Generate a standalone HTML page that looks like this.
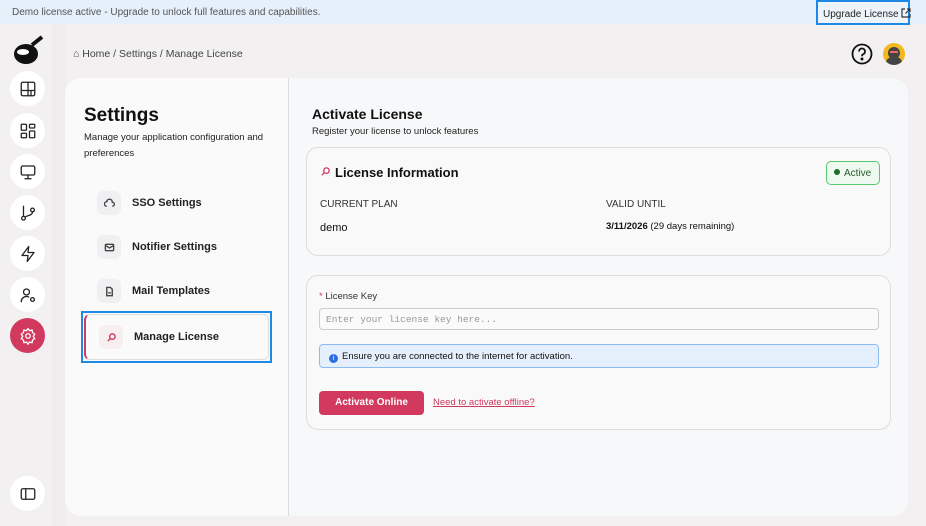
<!DOCTYPE html>
<html><head><meta charset="utf-8"><style>
*{box-sizing:border-box;margin:0;padding:0}
body{width:926px;height:526px;overflow:hidden;background:#f2f0f0;font-family:"Liberation Sans",sans-serif;color:#111;position:relative}
.banner{position:absolute;left:0;top:0;width:926px;height:24px;background:#e6f0fa;font-size:10px;color:#555;padding:7px 0 0 12px;white-space:nowrap}
.up{position:absolute;right:16px;top:0;width:94px;height:25px;border:2px solid #1e88e5;padding:6px 0 0 5px;font-size:10px;color:#222;background:#eef4fb;white-space:nowrap}
.sideband{position:absolute;left:52px;top:24px;width:13px;height:502px;background:#eeecec}
.ic{position:absolute;left:10px;width:35px;height:35px;border-radius:50%;background:#fff;display:flex;align-items:center;justify-content:center}
.ic svg{width:18px;height:18px;fill:none;stroke:#222;stroke-width:1.7;stroke-linecap:round;stroke-linejoin:round}
.crumb{position:absolute;left:73px;top:48px;font-size:10.5px;color:#444}
.card{position:absolute;left:65px;top:78px;width:843px;height:438px;background:#fafafa;border-radius:16px;overflow:hidden}
.right{position:absolute;left:223px;top:0;right:0;bottom:0;background:#f7f8f9;border-left:1.5px solid #ddd}
h1{position:absolute;left:19px;top:27px;font-size:19px;font-weight:bold}
.sub{position:absolute;left:19px;top:52px;width:200px;font-size:9.5px;line-height:16px;color:#222}
.item{position:absolute;left:32px;font-size:11px;font-weight:bold;color:#222;display:flex;align-items:center}
.item .b{width:24px;height:24px;border-radius:6px;background:#f0f0f2;margin-right:11px;display:flex;align-items:center;justify-content:center}
.item svg{width:11px;height:11px;fill:none;stroke:#444;stroke-width:1.5}
.box{position:absolute;left:17px;right:17px;background:#f9f9f9;border:1.5px solid #ddd;border-radius:12px}
.lbl{position:absolute;font-size:10px;color:#333;white-space:nowrap}
</style></head><body>
<div class="banner">Demo license active - Upgrade to unlock full features and capabilities.</div>
<div class="up">Upgrade License <svg width="10" height="10" viewBox="0 0 10 10" style="vertical-align:-1px" fill="none" stroke="#333" stroke-width="1.2"><path d="M4 1H1v8h8V6M6 1h3v3M9 1L4.5 5.5"/></svg></div>
<div class="sideband"></div>
<svg style="position:absolute;left:12px;top:33px" width="32" height="32" viewBox="0 0 32 32"><ellipse cx="14" cy="21" rx="12" ry="10" fill="#111"/><ellipse cx="11" cy="19" rx="6" ry="3" fill="#fff"/><path d="M20 12L30 4" stroke="#111" stroke-width="4"/></svg>
<div class="ic" style="top:71px"><svg viewBox="0 0 24 24"><rect x="3" y="3" width="18" height="18" rx="2"/><path d="M3 14h18M12 3v18M16 14v7"/></svg></div>
<div class="ic" style="top:113px"><svg viewBox="0 0 24 24"><rect x="3" y="3" width="7" height="8" rx="1"/><rect x="14" y="3" width="7" height="5" rx="1"/><rect x="3" y="15" width="7" height="6" rx="1"/><rect x="14" y="12" width="7" height="9" rx="1"/></svg></div>
<div class="ic" style="top:154px"><svg viewBox="0 0 24 24"><rect x="3" y="4" width="18" height="12" rx="2"/><path d="M12 16v4M8 21h8"/></svg></div>
<div class="ic" style="top:195px"><svg viewBox="0 0 24 24"><circle cx="6" cy="19" r="2.5"/><circle cx="18" cy="8" r="2.5"/><path d="M6 3v13.5M18 10.5c0 5-6 4-10 7"/></svg></div>
<div class="ic" style="top:236px"><svg viewBox="0 0 24 24"><path d="M13 2L4 14h8l-1 8 9-12h-8z"/></svg></div>
<div class="ic" style="top:277px"><svg viewBox="0 0 24 24"><circle cx="10" cy="8" r="4"/><path d="M3 21c0-4 3-7 7-7 1.5 0 2 .2 3 .6"/><circle cx="18" cy="18" r="2.5"/></svg></div>
<div class="ic" style="top:318px;background:#d13a5e"><svg viewBox="0 0 24 24" style="stroke:#fff"><circle cx="12" cy="12" r="3"/><path d="M12 2l2 3 3.5-1 .5 3.5 3 2-2 3 2 3-3 2-.5 3.5-3.5-1-2 3-2-3-3.5 1-.5-3.5-3-2 2-3-2-3 3-2L6.5 4 10 5z"/></svg></div>
<div class="ic" style="top:476px"><svg viewBox="0 0 24 24"><rect x="3" y="5" width="18" height="14" rx="2"/><path d="M9 5v14"/></svg></div>
<div class="crumb">⌂ Home / Settings / Manage License</div>
<svg style="position:absolute;left:851px;top:43px" width="22" height="22" viewBox="0 0 22 22" fill="none" stroke="#111" stroke-width="1.8"><circle cx="11" cy="11" r="9.5"/><path d="M8 8.5a3 3 0 1 1 4 2.8c-.8.4-1 1-1 2" /><circle cx="11" cy="16" r=".6" fill="#111"/></svg>
<div style="position:absolute;left:883px;top:43px;width:22px;height:22px;border-radius:50%;background:#f2b81f;overflow:hidden"><div style="position:absolute;left:5px;top:4px;width:12px;height:12px;border-radius:50%;background:#444"></div><div style="position:absolute;left:3px;top:14px;width:16px;height:10px;border-radius:6px 6px 0 0;background:#444"></div><div style="position:absolute;left:7px;top:8px;width:8px;height:2px;background:#e66"></div></div>
<div class="card">
<h1>Settings</h1>
<div class="sub">Manage your application configuration and preferences</div>
<div class="item" style="top:113px"><div class="b"><svg viewBox="0 0 12 12"><path d="M3 9a2.5 2.5 0 0 1 0-5 3 3 0 0 1 6 .5 2 2 0 0 1 0 4.5"/></svg></div>SSO Settings</div>
<div class="item" style="top:157px"><div class="b"><svg viewBox="0 0 12 12"><rect x="1.5" y="2.5" width="9" height="7" rx="1"/><path d="M2 4l4 2.5L10 4"/></svg></div>Notifier Settings</div>
<div class="item" style="top:201px"><div class="b"><svg viewBox="0 0 12 12"><path d="M3 1.5h4l2 2v7H3z"/><path d="M4.5 7.5h3"/></svg></div>Mail Templates</div>
<div style="position:absolute;left:16px;top:233px;width:191px;height:52px;border:2.5px solid #1e88e5;background:#fafafa"><div style="position:absolute;left:1px;top:1px;right:1px;bottom:1px;border:1px solid #ddd;border-left:2px solid #d13a5e;border-radius:6px"></div>
<div class="item" style="left:16px;top:12px"><div class="b" style="background:#f7eef0"><svg viewBox="0 0 12 12" style="stroke:#d13a5e"><circle cx="7" cy="5" r="3"/><path d="M5 7l-3 3"/></svg></div>Manage License</div></div>
<div class="right">
<div style="position:absolute;left:23px;top:28px;font-size:14px;font-weight:bold">Activate License</div>
<div style="position:absolute;left:23px;top:48px;font-size:9.5px;color:#222">Register your license to unlock features</div>
<div class="box" style="top:69px;height:109px">
<svg style="position:absolute;left:13px;top:18px" width="11" height="11" viewBox="0 0 12 12" fill="none" stroke="#d13a5e" stroke-width="1.4"><circle cx="7" cy="5" r="3"/><path d="M5 7l-3 3"/></svg>
<div style="position:absolute;left:28px;top:17px;font-size:13px;font-weight:bold;color:#111">License Information</div>
<div style="position:absolute;right:10px;top:13px;width:54px;height:24px;border:1.5px solid #5ac46e;border-radius:5px;background:#eefaf0;font-size:10px;padding:6px 0 0 7px;color:#2a5a2a;white-space:nowrap;line-height:11px"><span style="display:inline-block;width:6px;height:6px;border-radius:50%;background:#1f6b2a;margin-right:4px;vertical-align:1px"></span>Active</div>
<div class="lbl" style="left:13px;top:51px;color:#333">CURRENT PLAN</div>
<div class="lbl" style="left:299px;top:51px;color:#333">VALID UNTIL</div>
<div class="lbl" style="left:13px;top:74px;font-size:11px;color:#111">demo</div>
<div class="lbl" style="left:299px;top:73px;font-size:9.5px;color:#111"><b>3/11/2026</b> (29 days remaining)</div>
</div>
<div class="box" style="top:197px;height:155px">
<div class="lbl" style="left:12px;top:15px;font-size:9.5px"><span style="color:#d13a5e">*</span> License Key</div>
<div style="position:absolute;left:12px;top:32px;right:11px;height:22px;border:1px solid #ccc;border-radius:4px;background:#fafafa;font-family:'Liberation Mono',monospace;font-size:9.5px;color:#999;padding:5px 0 0 6px">Enter your license key here...</div>
<div style="position:absolute;left:12px;top:68px;right:11px;height:24px;border:1px solid #8cbcf0;border-radius:4px;background:#e6f0fc;font-size:9.5px;color:#111;padding:6px 0 0 9px"><span style="display:inline-block;width:9px;height:9px;border-radius:50%;background:#2d6fe0;color:#fff;font-size:7px;text-align:center;line-height:9px;margin-right:4px;vertical-align:-1px">i</span>Ensure you are connected to the internet for activation.</div>
<div style="position:absolute;left:12px;top:115px;width:105px;height:24px;border-radius:4px;background:#d13a5e;color:#fff;font-size:10px;font-weight:bold;text-align:center;line-height:24px">Activate Online</div>
<div style="position:absolute;left:126px;top:121px;font-size:9.5px;color:#d13a5e;text-decoration:underline">Need to activate offline?</div>
</div>
</div>
</div>
</body></html>
